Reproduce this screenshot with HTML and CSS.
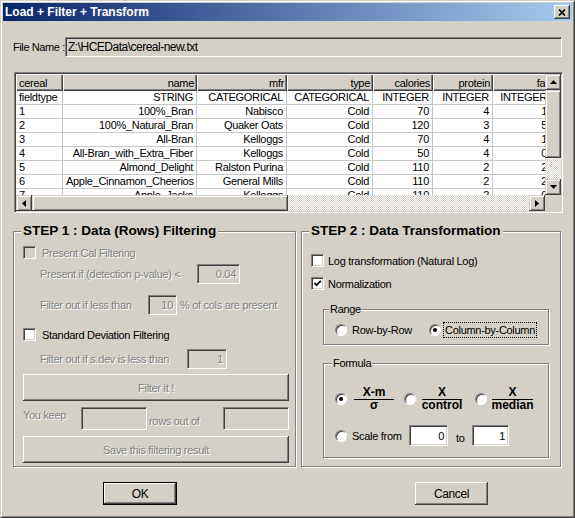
FILE: index.html
```html
<!DOCTYPE html>
<html lang="en">
<head>
    <meta charset="UTF-8" />
    <title>Load + Filter + Transform</title>
    <link rel="stylesheet" href="styles.css">
</head>
<body>
    <div class="window">
        <!-- Title bar -->
        <div class="titlebar">
            <span class="title">Load + Filter + Transform</span>
            <span class="close-btn">
                <svg width="8" height="7" viewBox="0 0 8 7"><path d="M1 0.5 L7 6.5 M7 0.5 L1 6.5" stroke="#000" stroke-width="1.7" fill="none"/></svg>
            </span>
        </div>

        <!-- Source file -->
        <div class="file-row">
            <span class="file-label">File Name :</span>
            <div class="field file-field">Z:\HCEData\cereal-new.txt</div>
        </div>

        <!-- Data grid -->
        <div class="grid">
            <div class="grid-main">
                <div class="grid-view">
                    <table>
                        <colgroup>
                            <col style="width:47px"><col style="width:134px"><col style="width:90px">
                            <col style="width:86px"><col style="width:60px"><col style="width:60px"><col style="width:58px">
                        </colgroup>
                        <thead>
                            <tr><th class="first">cereal</th><th>name</th><th>mfr</th><th>type</th><th>calories</th><th>protein</th><th>fat</th></tr>
                        </thead>
                        <tbody>
                            <tr><td class="first">fieldtype</td><td>STRING</td><td>CATEGORICAL</td><td>CATEGORICAL</td><td>INTEGER</td><td>INTEGER</td><td>INTEGER</td></tr>
                            <tr><td class="first">1</td><td>100%_Bran</td><td>Nabisco</td><td>Cold</td><td>70</td><td>4</td><td>1</td></tr>
                            <tr><td class="first">2</td><td>100%_Natural_Bran</td><td>Quaker Oats</td><td>Cold</td><td>120</td><td>3</td><td>5</td></tr>
                            <tr><td class="first">3</td><td>All-Bran</td><td>Kelloggs</td><td>Cold</td><td>70</td><td>4</td><td>1</td></tr>
                            <tr><td class="first">4</td><td>All-Bran_with_Extra_Fiber</td><td>Kelloggs</td><td>Cold</td><td>50</td><td>4</td><td>0</td></tr>
                            <tr><td class="first">5</td><td>Almond_Delight</td><td>Ralston Purina</td><td>Cold</td><td>110</td><td>2</td><td>2</td></tr>
                            <tr><td class="first">6</td><td>Apple_Cinnamon_Cheerios</td><td>General Mills</td><td>Cold</td><td>110</td><td>2</td><td>2</td></tr>
                            <tr><td class="first">7</td><td>Apple_Jacks</td><td>Kelloggs</td><td>Cold</td><td>110</td><td>2</td><td>0</td></tr>
                        </tbody>
                    </table>
                </div>
                <div class="vscroll">
                    <span class="sb-btn"><svg width="7" height="4" viewBox="0 0 7 4"><polygon points="0,4 3.5,0 7,4" fill="#000"/></svg></span>
                    <span class="sb-thumb v-thumb"></span>
                    <span class="sb-track"></span>
                    <span class="sb-btn"><svg width="7" height="4" viewBox="0 0 7 4"><polygon points="0,0 7,0 3.5,4" fill="#000"/></svg></span>
                </div>
            </div>
            <div class="hscroll">
                <span class="sb-btn"><svg width="4" height="7" viewBox="0 0 4 7"><polygon points="4,0 4,7 0,3.5" fill="#000"/></svg></span>
                <span class="sb-thumb h-thumb"></span>
                <span class="sb-track"></span>
                <span class="sb-btn"><svg width="4" height="7" viewBox="0 0 4 7"><polygon points="0,0 0,7 4,3.5" fill="#000"/></svg></span>
                <span class="sb-corner"></span>
            </div>
        </div>

        <!-- Filtering / transformation steps -->
        <div class="steps">
            <fieldset class="group step step1">
                <legend>STEP 1 : Data (Rows) Filtering</legend>
                <div class="check-row r1 disabled">
                    <span class="check off"></span>
                    <span>Present Cal Filtering</span>
                </div>
                <div class="line r2 disabled">
                    <span class="lbl" style="width:157px">Present if (detection p-value) &lt;</span>
                    <span class="field num-field off" style="width:43px">0.04</span>
                </div>
                <div class="line r3 disabled">
                    <span class="lbl" style="width:108px">Filter out if less than</span>
                    <span class="field num-field off" style="width:29px">10</span>
                    <span class="after">% of cols are present</span>
                </div>
                <div class="check-row r4">
                    <span class="check"></span>
                    <span>Standard Deviation Filtering</span>
                </div>
                <div class="line r5 disabled">
                    <span class="lbl" style="width:147px">Filter out if s.dev is less than</span>
                    <span class="field num-field off" style="width:40px">1</span>
                </div>
                <button class="btn wide r6" disabled>Filter it !</button>
                <div class="keep-row r7 disabled">
                    <span class="keep-lbl" style="width:58px">You keep</span>
                    <span class="field off" style="width:66px"></span>
                    <span class="keep-lbl rows-lbl" style="width:76px">rows out of</span>
                    <span class="field off" style="width:66px"></span>
                </div>
                <button class="btn wide r8" disabled>Save this filtering result</button>
            </fieldset>

            <fieldset class="group step step2">
                <legend>STEP 2 : Data Transformation</legend>
                <div class="check-row t1">
                    <span class="check"></span>
                    <span>Log transformation (Natural Log)</span>
                </div>
                <div class="check-row t2">
                    <span class="check">
                        <svg width="9" height="9" viewBox="0 0 9 9"><path d="M1.5 4 L3.5 6.2 L7.8 1.8" stroke="#000" stroke-width="1.8" fill="none"/></svg>
                    </span>
                    <span>Normalization</span>
                </div>

                <fieldset class="group sub range">
                    <legend>Range</legend>
                    <div class="radio-row range-row">
                        <span class="radio" style="width:98px"><span class="dot"></span><span>Row-by-Row</span></span>
                        <span class="radio"><span class="dot on"></span><span class="focus">Column-by-Column</span></span>
                    </div>
                </fieldset>

                <fieldset class="group sub formula">
                    <legend>Formula</legend>
                    <div class="radio-row frac-row">
                        <span class="dot on"></span>
                        <span class="frac f1"><span class="num">X-m</span><span class="den">σ</span></span>
                        <span class="dot d2"></span>
                        <span class="frac f2"><span class="num">X</span><span class="den">control</span></span>
                        <span class="dot d3"></span>
                        <span class="frac f3"><span class="num">X</span><span class="den">median</span></span>
                    </div>
                    <div class="radio-row scale-row">
                        <span class="dot"></span>
                        <span class="scale-lbl">Scale from</span>
                        <span class="field num-field" style="width:39px">0</span>
                        <span class="to-lbl">to</span>
                        <span class="field num-field" style="width:37px">1</span>
                    </div>
                </fieldset>
            </fieldset>
        </div>

        <!-- Dialog buttons -->
        <div class="actions">
            <button class="btn default ok">OK</button>
            <button class="btn cancel">Cancel</button>
        </div>
    </div>
</body>
</html>
```

FILE: styles.css
```css
/* === Base === */
body {
    margin: 0;
    font-family: "Liberation Sans", Arial, sans-serif;
    font-size: 11px;
    letter-spacing: -0.3px;
    color: #000;
    background: #d4d0c8;
    white-space: nowrap;
}

/* === Window frame === */
.window {
    width: 575px;
    height: 518px;
    box-sizing: border-box;
    background: #d4d0c8;
    border: 1px solid;
    border-color: #d4d0c8 #404040 #404040 #d4d0c8;
    box-shadow: inset 1px 1px #fff, inset -1px -1px #808080;
    padding: 2px;
}

.titlebar {
    height: 18px;
    display: flex;
    align-items: center;
    justify-content: space-between;
    padding: 0 2px 0 2px;
    background: linear-gradient(to right, #0a246a, #a6caf0);
}

.title {
    color: #fff;
    font-weight: bold;
    font-size: 12px;
    letter-spacing: 0;
}

.close-btn {
    width: 16px;
    height: 14px;
    box-sizing: border-box;
    background: #d4d0c8;
    box-shadow: inset -1px -1px #404040, inset 1px 1px #fff, inset -2px -2px #808080;
    display: flex;
    align-items: center;
    justify-content: center;
}

/* === Sunken fields === */
.field {
    box-sizing: border-box;
    height: 20px;
    border: 1px solid;
    border-color: #808080 #fff #fff #808080;
    box-shadow: inset 1px 1px #404040, inset -1px -1px #d4d0c8;
    background: #fff;
    padding: 0 3px;
    display: flex;
    align-items: center;
    white-space: nowrap;
    flex: none;
}

    .field.off {
        background: #d4d0c8;
    }

.num-field {
    justify-content: flex-end;
}

.file-row {
    display: flex;
    align-items: center;
    margin: 16px 10px 0 10px;
}

.file-label {
    width: 52px;
    flex: none;
    font-size: 11px;
    letter-spacing: -0.4px;
}

.file-field {
    flex: 1;
    background: #d4d0c8;
    font-size: 12px;
    letter-spacing: -0.5px;
    padding-left: 2px;
}

/* === Data grid === */
.grid {
    margin: 15px 9px 0 11px;
    height: 141px;
    box-sizing: border-box;
    border: 1px solid;
    border-color: #808080 #fff #fff #808080;
    box-shadow: inset 1px 1px #404040, inset -1px -1px #d4d0c8;
    padding: 1px;
    display: flex;
    flex-direction: column;
}

.grid-main {
    display: flex;
    height: 121px;
}

.grid-view {
    flex: 1;
    overflow: hidden;
    background: #fff;
}

table {
    border-collapse: separate;
    border-spacing: 0;
    table-layout: fixed;
    width: 535px;
}

th, td {
    box-sizing: border-box;
    padding: 0 3px;
    text-align: right;
    white-space: nowrap;
    overflow: hidden;
    font-weight: normal;
}

th {
    height: 17px;
    background: #d4d0c8;
    box-shadow: inset 1px 1px #fff, inset -1px -1px #404040, inset -2px -2px #808080;
}

td {
    height: 14px;
    line-height: 13px;
    border-right: 1px solid #c8c8c8;
    border-bottom: 1px solid #c8c8c8;
}

    th.first, td.first {
        text-align: left;
        padding-left: 3px;
    }

/* === Scrollbars === */
.vscroll {
    width: 16px;
    display: flex;
    flex-direction: column;
}

.hscroll {
    height: 16px;
    display: flex;
}

.sb-btn, .sb-thumb {
    width: 16px;
    height: 16px;
    flex: none;
    background: #d4d0c8;
    box-shadow: inset -1px -1px #404040, inset 1px 1px #d4d0c8, inset 2px 2px #fff, inset -2px -2px #808080;
    display: flex;
    align-items: center;
    justify-content: center;
}

.v-thumb {
    height: 68px;
}

.h-thumb {
    width: 256px;
}

.sb-track {
    flex: 1;
    background: repeating-conic-gradient(#fff 0 25%, #d4d0c8 0 50%) 0 0 / 2px 2px;
}

.sb-corner {
    width: 16px;
    background: #d4d0c8;
}

/* === Group boxes === */
.steps {
    display: flex;
    gap: 5px;
    margin: 10px 11px 0 10px;
}

.group {
    margin: 0;
    min-width: 0;
    border: 1px solid #808080;
    box-shadow: 1px 1px #fff, inset 1px 1px #fff;
}

.step > legend {
    padding: 0 2px;
    margin-left: -2px;
    font-size: 13.5px;
    line-height: 16px;
    font-weight: bold;
    letter-spacing: 0;
    background: #d4d0c8;
}

.step1 {
    width: 283px;
    box-sizing: border-box;
    padding: 0 6px 3px 9px;
}

.step2 {
    flex: 1;
    padding: 0 11px 8px 9px;
}

.sub {
    margin-left: 12px;
    padding: 0 11px 0 11px;
}

    .sub > legend {
        padding: 0 1px;
        font-size: 11px;
        line-height: 13px;
        font-weight: normal;
        background: #d4d0c8;
    }

.range > legend {
    margin-left: -6px;
}

.formula > legend {
    margin-left: -3px;
}

.disabled {
    color: #808080;
    text-shadow: 1px 1px #fff;
}

/* === Check boxes and radios === */
.check-row {
    display: flex;
    align-items: center;
    height: 13px;
    gap: 6px;
}

.check {
    width: 13px;
    height: 13px;
    box-sizing: border-box;
    border: 1px solid;
    border-color: #808080 #fff #fff #808080;
    box-shadow: inset 1px 1px #404040, inset -1px -1px #d4d0c8;
    background: #fff;
    flex: none;
    display: flex;
    align-items: center;
    justify-content: center;
}

    .check.off {
        background: #d4d0c8;
    }

.dot {
    width: 12px;
    height: 12px;
    box-sizing: border-box;
    border-radius: 50%;
    border: 1px solid;
    border-color: #808080 #fff #fff #808080;
    box-shadow: inset 1px 1px #404040;
    background: #fff;
    flex: none;
    display: flex;
    align-items: center;
    justify-content: center;
}

    .dot.on::after {
        content: "";
        width: 4px;
        height: 4px;
        border-radius: 50%;
        background: #000;
    }

.radio {
    display: inline-flex;
    align-items: center;
}

    .radio .dot + span {
        margin-left: 5px;
    }

    .radio .dot + .focus {
        margin-left: 2px;
        padding: 1px 1px;
        border: 1px dotted #000;
    }

.radio-row {
    display: flex;
    align-items: center;
}

/* === Step 1 rows === */
.line {
    display: flex;
    align-items: center;
    padding-left: 17px;
}

.after {
    margin-left: 3px;
}

.r1 { margin-top: 7px; }
.r2 { margin-top: 5px; }
.r3 { margin-top: 11px; }
.r4 { margin-top: 13px; }
.r5 { margin-top: 8px; }
.r6 { margin-top: 5px; }
.r7 { margin-top: 6px; }
.r8 { margin-top: 6px; }

.keep-row {
    display: flex;
    align-items: center;
    height: 23px;
}

    .keep-row .field {
        height: 23px;
    }

.keep-lbl {
    align-self: flex-start;
    padding-top: 2px;
}

.rows-lbl {
    padding-top: 8px;
    padding-left: 2px;
    box-sizing: border-box;
}

/* === Step 2 rows === */
.t1 { margin-top: 15px; gap: 4px; }
.t2 { margin-top: 10px; gap: 4px; }

.range {
    margin-top: 13px;
    padding-bottom: 5px;
}

.range-row {
    margin-top: 5px;
    height: 18px;
}

.formula {
    margin-top: 12px;
    padding-bottom: 11px;
}

.frac-row {
    margin-top: 17px;
    height: 24px;
}

.frac {
    display: inline-flex;
    flex-direction: column;
    align-items: center;
    font-weight: bold;
    font-size: 12px;
    line-height: 11px;
    letter-spacing: 0;
}

    .frac .num {
        align-self: stretch;
        text-align: center;
        border-bottom: 1px solid #000;
        padding-bottom: 1px;
    }

.f1 { width: 40px; margin-left: 7px; }
.d2 { margin-left: 10px; }
.f2 { width: 40px; margin-left: 6px; }
.d3 { margin-left: 13px; }
.f3 { width: 41px; margin-left: 5px; }

.scale-row {
    margin-top: 14px;
    height: 21px;
}

    .scale-row .field {
        height: 21px;
    }

.scale-lbl {
    margin-left: 5px;
    width: 57px;
}

.to-lbl {
    width: 24px;
    padding-left: 8px;
    box-sizing: border-box;
    margin-top: 4px;
}

/* === Buttons === */
.btn {
    box-sizing: border-box;
    background: #d4d0c8;
    border: 0;
    padding: 0;
    box-shadow: inset -1px -1px #404040, inset 1px 1px #fff, inset -2px -2px #808080;
    font-family: "Liberation Sans", Arial, sans-serif;
    font-size: 11px;
    letter-spacing: -0.3px;
    color: #000;
    display: flex;
    align-items: center;
    justify-content: center;
}

    .btn:disabled {
        color: #808080;
        text-shadow: 1px 1px #fff;
    }

.wide {
    width: 266px;
    height: 27px;
}

.actions {
    display: flex;
    margin-top: 15px;
}

    .actions .btn {
        height: 23px;
        font-size: 12px;
        letter-spacing: -0.4px;
    }

.btn.default {
    border: 1px solid #000;
}

.ok {
    width: 74px;
    margin-left: 100px;
}

.cancel {
    width: 73px;
    margin-left: 238px;
}
```
